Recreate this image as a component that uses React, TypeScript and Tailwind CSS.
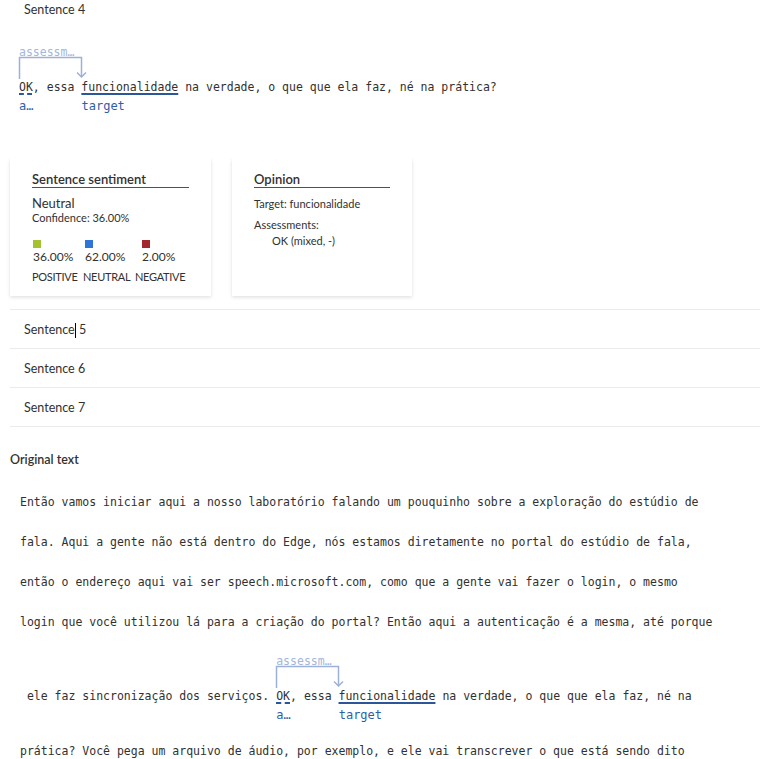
import React from "react";

function Annotated({ rest }: { rest: string }) {
  return (
    <div className="flex flex-col">
      <div className="relative h-[34px]">
        <span className="absolute left-0 top-0 leading-[14px] text-[#a3b6db] whitespace-pre">assessm…</span>
        <svg className="absolute left-0 top-0" width="70" height="34" style={{ overflow: "visible" }}>
          <path d="M0.5 34 V12.5 H62.5 V31.5" stroke="#9cb1d8" strokeWidth="1.5" fill="none" />
          <path d="M58 27.5 L62.5 32 L67 27.5" stroke="#9cb1d8" strokeWidth="1.5" fill="none" />
        </svg>
      </div>
      <div className="h-[16px] leading-[16px] whitespace-pre">
        <span className="underline decoration-dashed decoration-2 decoration-[#2b579a] underline-offset-[2px]">OK</span>
        {", essa "}
        <span className="underline decoration-2 decoration-[#2b579a] underline-offset-[2px]">funcionalidade</span>
        {rest}
      </div>
      <div className="h-[16px] leading-[16px] mt-[3px] whitespace-pre text-[#2f5ea8] text-[12px]">
        <span className="inline-block w-[62.5px]">a…</span>
        <span>target</span>
      </div>
    </div>
  );
}

function Row({ children }: { children: React.ReactNode }) {
  return (
    <div className="h-[39px] border-b border-[#edebe9] pl-[14px] pt-[2px] flex items-center text-[12.5px]">{children}</div>
  );
}

function Stat({ w, off, color, pct, label }: { w: string; off: string; color: string; pct: string; label: string }) {
  return (
    <div className={`${w} shrink-0 flex flex-col whitespace-nowrap`}>
      <div className={`${off} w-[8px] h-[8px] ${color}`} />
      <div className={`${off} mt-[2px] h-[14px] leading-[14px] text-[12px]`}>{pct}</div>
      <div className="mt-[6px] h-[14px] leading-[14px] text-[11px] tracking-[-0.3px]">{label}</div>
    </div>
  );
}

export default function App() {
  const mono = "font-['DejaVu_Sans_Mono',monospace] text-[11.5px] text-[#323130]";
  const lines = [
    "Então vamos iniciar aqui a nosso laboratório falando um pouquinho sobre a exploração do estúdio de",
    "fala. Aqui a gente não está dentro do Edge, nós estamos diretamente no portal do estúdio de fala,",
    "então o endereço aqui vai ser speech.microsoft.com, como que a gente vai fazer o login, o mesmo",
    "login que você utilizou lá para a criação do portal? Então aqui a autenticação é a mesma, até porque",
  ];
  const shadow = "shadow-[0_1.6px_3.6px_rgba(0,0,0,0.13),0_0.3px_0.9px_rgba(0,0,0,0.11)]";
  return (
    <div className="w-[760px] h-[759px] overflow-hidden bg-white text-[#323130] font-['Lato',sans-serif]">
      <div className="h-[20px] pl-[24px] flex items-center text-[12.5px]">Sentence 4</div>

      <div className={`mt-[25px] pl-[19px] ${mono}`}>
        <Annotated rest=" na verdade, o que que ela faz, né na prática?" />
      </div>

      <div className="mt-[44px] pl-[10px] flex gap-[21px]">
        <div className={`w-[201px] h-[138px] bg-white px-[22px] pt-[14px] ${shadow}`}>
          <div className="h-[16px] leading-[15px] text-[13px] font-semibold border-b border-[#2b579a]">Sentence sentiment</div>
          <div className="mt-[7px] h-[16px] leading-[16px] text-[13px]">Neutral</div>
          <div className="h-[14px] leading-[14px] text-[11px]">Confidence: 36.00%</div>
          <div className="mt-[15px] flex">
            <Stat w="w-[51px]" off="ml-[1px]" color="bg-[#a4c22f]" pct="36.00%" label="POSITIVE" />
            <Stat w="w-[52px]" off="ml-[2px]" color="bg-[#2f74d9]" pct="62.00%" label="NEUTRAL" />
            <Stat w="w-[50px]" off="ml-[7px]" color="bg-[#a4262c]" pct="2.00%" label="NEGATIVE" />
          </div>
        </div>
        <div className={`w-[180px] h-[138px] bg-white px-[22px] pt-[14px] ${shadow}`}>
          <div className="h-[16px] leading-[15px] text-[13px] font-semibold border-b border-[#2b579a]">Opinion</div>
          <div className="mt-[9px] h-[14px] leading-[14px] text-[11px]">Target: funcionalidade</div>
          <div className="mt-[7px] h-[14px] leading-[14px] text-[11px]">Assessments:</div>
          <div className="mt-[2px] pl-[18px] h-[14px] leading-[14px] text-[11px]">OK (mixed, -)</div>
        </div>
      </div>

      <div className="mt-[13px] ml-[10px] border-t border-[#edebe9]">
        <Row>
          <span>Sentence</span>
          <span className="inline-block w-px h-[15px] bg-black" />
          <span className="whitespace-pre"> 5</span>
        </Row>
        <Row>Sentence 6</Row>
        <Row>Sentence 7</Row>
      </div>

      <div className="mt-[25px] pl-[10px] h-[16px] leading-[16px] text-[12.5px] font-semibold">Original text</div>

      <div className={`mt-[14px] pl-[20px] ${mono}`}>
        {lines.map((l) => (
          <div key={l} className="h-[40px] pt-[2px] flex items-center whitespace-pre">{l}</div>
        ))}
        <div className="pt-[12px] flex items-start">
          <span className="mt-[34px] h-[16px] leading-[16px] whitespace-pre"> ele faz sincronização dos serviços. </span>
          <Annotated rest=" na verdade, o que que ela faz, né na" />
        </div>
        <div className="mt-[9px] h-[40px] flex items-center whitespace-pre">prática? Você pega um arquivo de áudio, por exemplo, e ele vai transcrever o que está sendo dito</div>
      </div>
    </div>
  );
}
